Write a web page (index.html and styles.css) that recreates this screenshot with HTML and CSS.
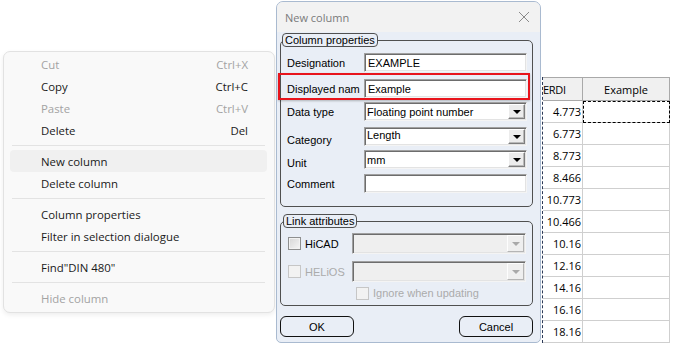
FILE: index.html
```html
<!DOCTYPE html>
<html>
<head>
<meta charset="utf-8">
<title>New column</title>
<link rel="stylesheet" href="styles.css">
</head>
<body>
<div class="page">
  <div class="menu">
    <div class="mi dis"><span>Cut</span><span>Ctrl+X</span></div>
    <div class="mi"><span>Copy</span><span>Ctrl+C</span></div>
    <div class="mi dis"><span>Paste</span><span>Ctrl+V</span></div>
    <div class="mi"><span>Delete</span><span>Del</span></div>
    <div class="sep"></div>
    <div class="mi hov"><span>New column</span></div>
    <div class="mi"><span>Delete column</span></div>
    <div class="sep"></div>
    <div class="mi"><span>Column properties</span></div>
    <div class="mi"><span>Filter in selection dialogue</span></div>
    <div class="sep"></div>
    <div class="mi"><span>Find"DIN 480"</span></div>
    <div class="sep"></div>
    <div class="mi dis"><span>Hide column</span></div>
  </div>

  <div class="dialog">
    <div class="titlebar">
      <span class="title">New column</span>
      <svg class="close" width="12" height="12" viewBox="0 0 12 12"><path d="M1 1L11 11M11 1L1 11" stroke="#8a8a8a" stroke-width="1" fill="none"/></svg>
    </div>
    <div class="dbody">
      <fieldset class="grp g1">
        <legend>Column properties</legend>
        <div class="row r1"><span class="lbl">Designation</span><span class="field">EXAMPLE</span></div>
        <div class="hl">
          <div class="row"><span class="lbl">Displayed nam</span><span class="field">Example</span></div>
        </div>
        <div class="row r3"><span class="lbl">Data type</span><span class="field sel"><span class="val">Floating point number</span><span class="dd"><i></i></span></span></div>
        <div class="row r4"><span class="lbl low">Category</span><span class="field sel"><span class="val up">Length</span><span class="dd"><i></i></span></span></div>
        <div class="row r5"><span class="lbl low">Unit</span><span class="field sel"><span class="val">mm</span><span class="dd"><i></i></span></span></div>
        <div class="row r6"><span class="lbl">Comment</span><span class="field"></span></div>
      </fieldset>

      <fieldset class="grp g2">
        <legend>Link attributes</legend>
        <div class="lrow">
          <span class="cbl"><span class="cb"></span>HiCAD</span>
          <span class="field sel off"><span class="val"></span><span class="dd"><i></i></span></span>
        </div>
        <div class="lrow l2">
          <span class="cbl dis"><span class="cb"></span>HELiOS</span>
          <span class="field sel off"><span class="val"></span><span class="dd"><i></i></span></span>
        </div>
        <div class="irow"><span class="cbl dis"><span class="cb"></span>Ignore when updating</span></div>
      </fieldset>

      <div class="buttons">
        <button class="btn">OK</button>
        <button class="btn">Cancel</button>
      </div>
    </div>
  </div>

  <div class="tbl">
    <div class="th first">ERDI</div><div class="th second">Example</div>
    <div class="td">4.773</div><div class="td e focus"></div>
    <div class="td">6.773</div><div class="td e"></div>
    <div class="td">8.773</div><div class="td e"></div>
    <div class="td">8.466</div><div class="td e"></div>
    <div class="td">10.773</div><div class="td e"></div>
    <div class="td">10.466</div><div class="td e"></div>
    <div class="td">10.16</div><div class="td e"></div>
    <div class="td">12.16</div><div class="td e"></div>
    <div class="td">14.16</div><div class="td e"></div>
    <div class="td">16.16</div><div class="td e"></div>
    <div class="td">18.16</div><div class="td e"></div>
  </div>
</div>
</body>
</html>
```

FILE: styles.css
```css
* { box-sizing: border-box; }
html, body { margin: 0; padding: 0; background: #fff; }

.page {
  display: flex;
  align-items: flex-start;
  width: 673px;
  height: 344px;
  overflow: hidden;
}

/* context menu */
.menu {
  margin: 51px 0 0 3px;
  width: 272px;
  background: #f9f9f9;
  border: 1px solid #e2e2e2;
  border-radius: 7px;
  padding: 1px 0 3px;
  font-family: "Open Sans", sans-serif;
  font-size: 11.4px;
  color: #1a1a1a;
  box-shadow: 0 2px 5px rgba(0,0,0,0.07);
}
.mi {
  height: 22px;
  display: flex;
  align-items: center;
  justify-content: space-between;
  margin: 0 7px 0 6px;
  padding: 0 19px 0 31px;
  border-radius: 4px;
}
.mi.dis { color: #a3a3a3; }
.mi.hov { background: #f0f0f0; }
.sep {
  height: 1px;
  margin: 4px 9px 4px 8px;
  background: #e3e3e3;
}

/* dialog */
.dialog {
  margin: 1px 0 0 1px;
  width: 265px;
  height: 342px;
  border: 1px solid #a9bad0;
  border-radius: 7px 7px 5px 5px;
  background: #e9eef6;
  font-family: "Liberation Sans", Arial, sans-serif;
  font-size: 11px;
  color: #000;
  overflow: hidden;
}
.titlebar {
  height: 30px;
  background: #f2f2f2;
  display: flex;
  align-items: center;
  justify-content: space-between;
  padding: 0 10px 0 8px;
}
.title {
  font-family: "Open Sans", sans-serif;
  font-size: 11px;
  color: #7a7a7a;
  padding-top: 1px;
}
.close { display: block; }

.dbody {
  padding: 1px 7px 0 3px;
}
.grp {
  margin: 0;
  width: 253px;
  min-width: 0;
  border: 1px solid #505050;
  border-radius: 5px;
}
.grp legend {
  margin-left: -5px;
  padding: 0 2px;
  height: 14px;
  line-height: 12px;
  border: 1px solid #505050;
  border-radius: 4px;
  background: #e9eef6;
}
.g1 { padding: 6px 6px 13px 6px; }
.g2 { margin-top: 7px; padding: 5px 6px 5px 7px; }

.row {
  display: flex;
  align-items: center;
  height: 19px;
}
.r3 { margin-top: 2px; }
.r4 { margin-top: 6px; }
.r5 { margin-top: 4px; }
.r6 { margin-top: 5px; }
.lbl { width: 77px; flex: none; }
.lbl.low { position: relative; top: 3px; }

.hl {
  margin: 1px -4px 0 -9px;
  padding: 4px 1px 0 7px;
  border: 2px solid #e8141c;
  height: 27px;
  box-shadow: 0 1px 2px rgba(0,0,0,0.25);
}
.hl .row { padding-right: 3px; }

.field {
  width: 163px;
  height: 19px;
  flex: none;
  background: #fff;
  border: 1px solid;
  border-color: #a0a0a0 #f4f4f4 #f4f4f4 #a0a0a0;
  box-shadow: inset 1px 1px 0 #6d6d6d, inset -1px -1px 0 #e3e3e3;
  padding: 0 3px;
  display: flex;
  align-items: center;
  white-space: nowrap;
}
.field.sel { padding: 0 0 0 2px; }
.val { flex: 1; }
.val.up { position: relative; top: -2px; }
.dd {
  width: 17px;
  height: 15px;
  margin-right: 1px;
  background: #ececec;
  border: 1px solid;
  border-color: #fff #7e7e7e #7e7e7e #fff;
  box-shadow: inset -1px -1px 0 #b9b9b9;
  display: flex;
  align-items: center;
  justify-content: center;
}
.dd i {
  display: block;
  width: 0; height: 0;
  border-left: 4px solid transparent;
  border-right: 4px solid transparent;
  border-top: 4px solid #000;
  margin-left: 1px;
}
.field.off { background: #efefef; width: 174px; height: 21px; }
.field.off .dd { height: 17px; background: #efefef; border-color: #fdfdfd #b5b5b5 #b5b5b5 #fdfdfd; box-shadow: none; }
.field.off .dd i { border-top-color: #a9a9a9; }

.lrow {
  display: flex;
  align-items: center;
  justify-content: space-between;
  height: 21px;
}
.l2 { margin-top: 7px; }
.irow {
  margin-top: 4px;
  height: 14px;
  padding-left: 68px;
  display: flex;
  align-items: center;
}
.cbl {
  display: flex;
  align-items: center;
  gap: 4px;
}
.cbl.dis { color: #ababab; }
.cb {
  width: 13px;
  height: 13px;
  border: 1px solid #8e8f8f;
  background: linear-gradient(135deg, #d6d6d6, #f6f6f6);
  box-shadow: inset 0 0 0 1px #f2f2f2;
}
.cbl.dis .cb { border-color: #c6c6c6; background: #f2f2f2; box-shadow: none; }

.buttons {
  display: flex;
  justify-content: space-between;
  margin-top: 10px;
  width: 253px;
}
.btn {
  width: 74px;
  height: 21px;
  border: 1px solid #111;
  border-radius: 6px;
  background: #e9eef6;
  font-family: "Liberation Sans", Arial, sans-serif;
  font-size: 11px;
  color: #000;
  padding: 0;
}

/* table */
.tbl {
  margin: 77px 0 0 1px;
  width: 127px;
  display: grid;
  grid-template-columns: 40px 87px;
  grid-auto-rows: 22px;
  grid-template-rows: 24px;
  border-left: 1px dashed #2c3a58;
  font-family: "Open Sans", sans-serif;
  font-size: 11px;
  color: #000;
}
.th {
  background: #f0f0f0;
  border-top: 1px solid #a9a9a9;
  border-bottom: 1px solid #a9a9a9;
  display: flex;
  align-items: center;
  white-space: nowrap;
  overflow: hidden;
}
.th.first { padding-left: 0; border-right: 1px solid #a9a9a9; letter-spacing: -0.3px; }
.th.second { justify-content: center; border-right: 1px solid #a9a9a9; }
.td {
  border-bottom: 1px solid #cfcfcf;
  border-right: 1px solid #cfcfcf;
  display: flex;
  align-items: center;
  justify-content: flex-end;
  padding-right: 1px;
}
.td.focus { outline: 1px dashed #000; outline-offset: -1px; }
```
